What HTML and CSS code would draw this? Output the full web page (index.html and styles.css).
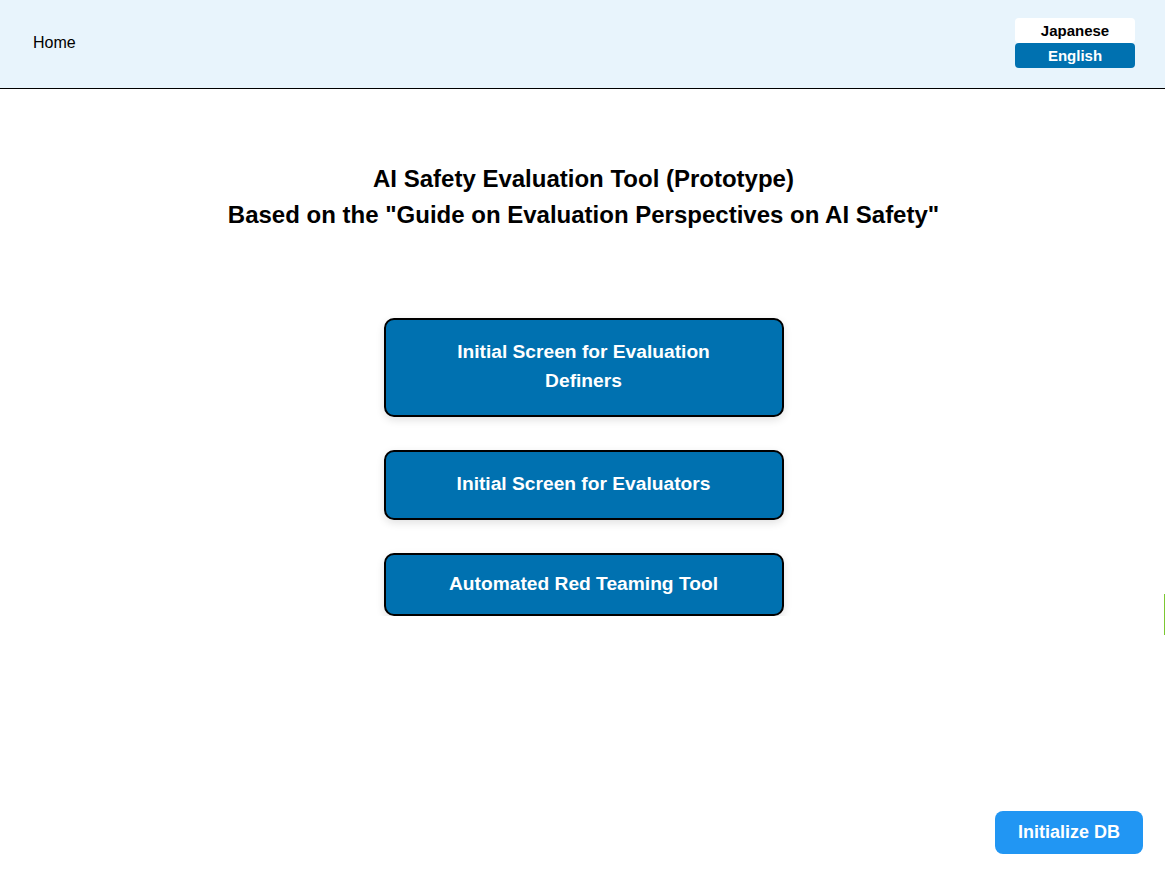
FILE: index.html
```html
<!DOCTYPE html>
<html lang="en">
<head>
<meta charset="utf-8">
<title>AI Safety Evaluation Tool</title>
<link rel="stylesheet" href="styles.css">
</head>
<body>
<header class="topbar">
  <a class="home-link" href="#">Home</a>
  <div class="lang-switch">
    <button class="lang-btn">Japanese</button>
    <button class="lang-btn active">English</button>
  </div>
</header>
<main class="main">
  <h1 class="title">AI Safety Evaluation Tool (Prototype)<br>Based on the "Guide on Evaluation Perspectives on AI Safety"</h1>
  <nav class="menu">
    <button class="menu-btn tall">Initial Screen for Evaluation<br>Definers</button>
    <button class="menu-btn mid">Initial Screen for Evaluators</button>
    <button class="menu-btn short">Automated Red Teaming Tool</button>
  </nav>
</main>
<div class="edge-mark"></div>
<button class="init-btn">Initialize DB</button>
</body>
</html>
```
FILE: styles.css
```css
html, body {
  margin: 0;
  padding: 0;
  background: #ffffff;
  font-family: "Liberation Sans", Arial, sans-serif;
  color: #000;
}
.topbar {
  height: 86px;
  padding: 0 30px 2px 33px;
  background: #e8f4fc;
  border-bottom: 1px solid #000;
  display: flex;
  align-items: center;
  justify-content: space-between;
}
.home-link {
  font-size: 16px;
  color: #000;
  text-decoration: none;
}
.lang-switch {
  display: flex;
  flex-direction: column;
  width: 120px;
}
.lang-btn {
  font-family: "Liberation Sans", Arial, sans-serif;
  font-weight: bold;
  font-size: 15px;
  height: 25px;
  border: none;
  border-radius: 4px;
  background: #ffffff;
  color: #000;
  padding: 0;
  line-height: 25px;
}
.lang-btn.active {
  background: #0071b0;
  color: #ffffff;
}
.main {
  display: flex;
  flex-direction: column;
  align-items: center;
  padding-left: 2px;
}
.title {
  margin: 72px 0 0;
  font-size: 24px;
  line-height: 36px;
  font-weight: bold;
  text-align: center;
}
.menu {
  margin-top: 85px;
  display: flex;
  flex-direction: column;
  gap: 33px;
  width: 400px;
}
.menu-btn {
  font-family: "Liberation Sans", Arial, sans-serif;
  font-weight: bold;
  font-size: 19.2px;
  line-height: 29px;
  color: #ffffff;
  background: #0071b0;
  border: 2px solid #000;
  border-radius: 10px;
  box-shadow: 0 3px 8px rgba(0,0,0,0.12);
  width: 400px;
  box-sizing: border-box;
  padding: 0 20px;
}
.menu-btn.tall { height: 99px; padding-bottom: 4px; }
.menu-btn.mid { height: 70px; padding-bottom: 4px; }
.menu-btn.short { height: 63px; padding-bottom: 2px; }
.edge-mark {
  position: absolute;
  left: 1164px;
  top: 594px;
  width: 1px;
  height: 41px;
  background: #7cc832;
}
.init-btn {
  position: fixed;
  right: 22px;
  bottom: 22px;
  width: 148px;
  height: 43px;
  border: none;
  border-radius: 8px;
  background: #2196f3;
  color: #ffffff;
  font-family: "Liberation Sans", Arial, sans-serif;
  font-weight: bold;
  font-size: 18px;
}
```
